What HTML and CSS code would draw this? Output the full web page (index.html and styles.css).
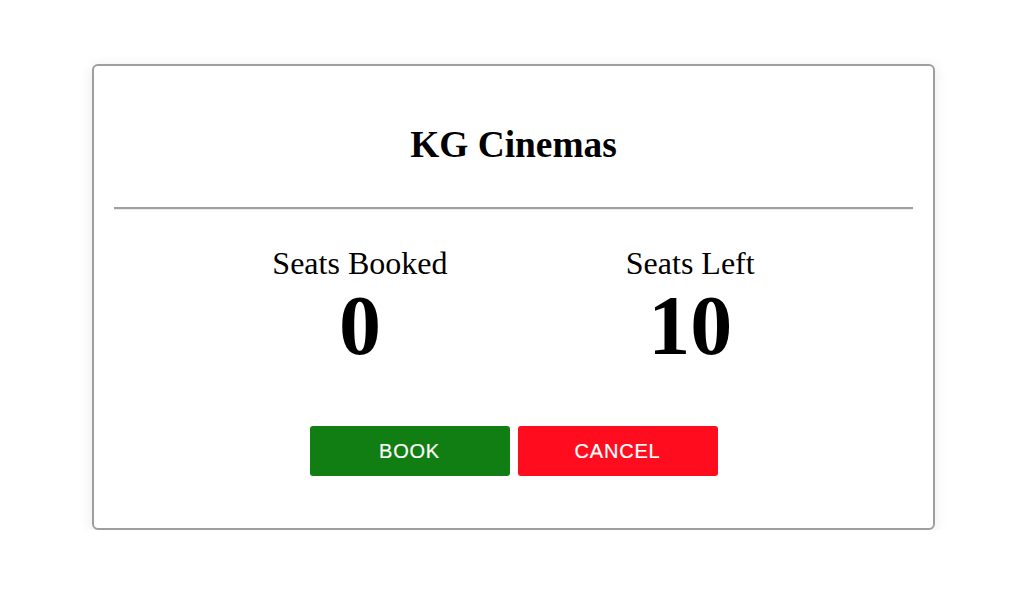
FILE: index.html
```html
<!DOCTYPE html>
<html lang="en">
<head>
<meta charset="utf-8">
<title>KG Cinemas</title>
<link rel="stylesheet" href="styles.css">
</head>
<body>
<div class="card">
  <h1 class="title">KG Cinemas</h1>
  <hr class="divider">
  <div class="stats">
    <div class="stat">
      <div class="stat-label">Seats Booked</div>
      <div class="stat-value">0</div>
    </div>
    <div class="stat">
      <div class="stat-label">Seats Left</div>
      <div class="stat-value">10</div>
    </div>
  </div>
  <div class="actions">
    <button class="btn btn-book">BOOK</button>
    <button class="btn btn-cancel">CANCEL</button>
  </div>
</div>
</body>
</html>
```

FILE: styles.css
```css
* { box-sizing: border-box; }
html, body { margin: 0; padding: 0; background: #ffffff; }
body {
  font-family: "Liberation Serif", "Times New Roman", serif;
  color: #000;
  padding-top: 64px;
}
.card {
  width: 843px;
  margin-left: 92px;
  border: 2px solid #9e9e9e;
  border-radius: 6px;
  box-shadow: 0 2px 14px rgba(0, 0, 0, 0.09);
  padding: 58px 0 52px;
  background: #fff;
}
.title {
  margin: 0;
  text-align: center;
  font-size: 37.4px;
  line-height: 42.5px;
  font-weight: bold;
}
.divider {
  margin: 40px 20px 0 20px;
  height: 0;
  border: 0;
  border-top: 2px solid #a0a0a0;
  border-bottom: 1px solid #ececec;
}
.stats {
  display: flex;
  justify-content: space-evenly;
  margin-top: 35px;
}
.stat {
  display: flex;
  flex-direction: column;
  align-items: center;
}
.stat-label {
  font-size: 32px;
  line-height: 36.8px;
}
.stat-value {
  font-size: 84px;
  line-height: 84px;
  font-weight: bold;
  margin-top: 3px;
}
.actions {
  display: flex;
  justify-content: center;
  gap: 8px;
  margin-top: 58px;
}
.btn {
  width: 200px;
  height: 50px;
  border: 0;
  border-radius: 3px;
  color: #fff;
  font-family: "Liberation Sans", Arial, sans-serif;
  font-size: 20px;
  letter-spacing: 0.8px;
  padding: 0;
  cursor: pointer;
  -webkit-text-stroke: 0.2px #fff;
}
.btn-book { background: #107e12; }
.btn-cancel { background: #ff0c1e; }
```
